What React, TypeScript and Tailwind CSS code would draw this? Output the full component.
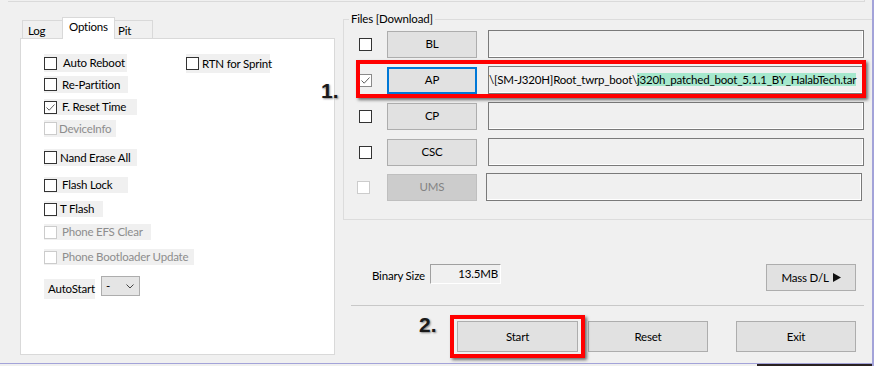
import React from 'react'

const Check = () => (
  <svg width="11" height="11" viewBox="0 0 11 11" className="block">
    <polyline points="1.5,5.5 4.2,8.2 9.5,2.5" fill="none" stroke="#5f5f5f" strokeWidth="1" />
  </svg>
)

interface BoxProps {
  checked?: boolean
  disabled?: boolean
  muted?: boolean
}

const Box: React.FC<BoxProps> = ({ checked = false, disabled = false, muted = false }) => (
  <span
    className={`flex w-[13px] h-[13px] shrink-0 items-center justify-center bg-white border ${
      disabled ? 'border-[#cccccc]' : muted ? 'border-[#8a8a8a]' : 'border-[#333333]'
    }`}
  >
    {checked && <Check />}
  </span>
)

interface OptProps {
  label: string
  cls: string
  gap: string
  checked?: boolean
  disabled?: boolean
}

const Opt: React.FC<OptProps> = ({ label, cls, gap, checked, disabled }) => (
  <div className={`flex items-center bg-[#f0f0f0] ${cls}`}>
    <Box checked={checked} disabled={disabled} />
    <span className={`${gap} leading-none whitespace-nowrap ${disabled ? 'text-[#8d8d8d]' : 'text-black'}`}>
      {label}
    </span>
  </div>
)

const Btn: React.FC<{ label: React.ReactNode; cls: string; focus?: boolean; disabled?: boolean }> = ({
  label,
  cls,
  focus,
  disabled,
}) => (
  <div
    className={`flex items-center justify-center border ${cls} ${
      disabled
        ? 'bg-[#cccccc] border-[#bfbfbf] text-[#838383]'
        : focus
        ? 'bg-[#e1e1e1] border-[#0078d7] shadow-[inset_0_0_0_1px_#0078d7] text-black'
        : 'bg-[#e1e1e1] border-[#adadad] text-black'
    }`}
  >
    {label}
  </div>
)

const Field: React.FC<{ cls: string; children?: React.ReactNode }> = ({ cls, children }) => (
  <div
    className={`flex items-center overflow-hidden bg-[#f0f0f0] border border-[#7a7a7a] shadow-[inset_-1px_-1px_0_#ffffff] h-[28px] ${cls}`}
  >
    {children}
  </div>
)

const Row: React.FC<{ name: string; cls: string; checked?: boolean; focus?: boolean; disabled?: boolean; children?: React.ReactNode }> = ({
  name,
  cls,
  checked,
  focus,
  disabled,
  children,
}) => (
  <div className={`flex items-center h-[28px] ${cls}`}>
    <div className={disabled ? 'ml-[13px]' : 'ml-[15px]'}>
      <Box checked={checked} muted={checked} disabled={disabled} />
    </div>
    <Btn label={name} cls={`w-[90px] h-[27px] ${disabled ? 'ml-[17px]' : 'ml-[15px]'}`} focus={focus} disabled={disabled} />
    <Field cls={disabled ? 'ml-[9px] w-[376px]' : 'ml-[11px] w-[376px]'}>{children}</Field>
  </div>
)

export default function App() {
  return (
    <div className="relative w-[874px] h-[366px] overflow-hidden bg-[#f0f0f0] border-r-2 border-[#a3a3d9] font-['Lato',sans-serif] text-[11.5px] tracking-[-0.2px] text-black">
      {/* strip from the control above */}
      <div className="ml-[8px] w-[857px] h-[2px] border-b border-r border-[#dadada]" />

      <div className="flex h-[361px]">
        {/* left: tabs */}
        <div className="w-[335px] pl-[20px]">
          <div className="mt-[15px] flex items-end h-[21px] pl-[2px]">
            <div className="relative w-[41px] h-[18px] border border-b-0 border-[#d9d9d9] bg-[#f0f0f0] pl-[5px] leading-[19px]">
              Log
            </div>
            <div className="relative z-10 -ml-px w-[53px] h-[22px] border border-b-0 border-[#d9d9d9] bg-white pl-[6px] leading-[18px] -mb-px">
              Options
            </div>
            <div className="relative -ml-px w-[39px] h-[18px] border border-b-0 border-[#d9d9d9] bg-[#f0f0f0] pl-[3px] leading-[19px]">
              Pit
            </div>
          </div>
          <div className="w-[315px] h-[317px] border border-[#d9d9d9] bg-white pl-[23px] flex flex-col">
            <div className="flex items-start mt-[15px]">
              <Opt label="Auto Reboot" cls="w-[83px] h-[18px]" gap="ml-[6px]" />
              <Opt label="RTN for Sprint" cls="ml-[59px] w-[84px] h-[19px]" gap="ml-[3px]" />
            </div>
            <Opt label="Re-Partition" cls="mt-[3px] w-[84px] h-[17px]" gap="ml-[5px]" />
            <Opt label="F. Reset Time" cls="mt-[6px] w-[93px] h-[16px]" gap="ml-[5px]" checked />
            <Opt label="DeviceInfo" cls="mt-[5px] w-[72px] h-[17px]" gap="ml-[2px]" disabled />
            <Opt label="Nand Erase All" cls="mt-[12px] w-[93px] h-[17px]" gap="ml-[3px]" />
            <Opt label="Flash Lock" cls="mt-[11px] w-[84px] h-[16px]" gap="ml-[5px]" />
            <Opt label="T Flash" cls="mt-[8px] w-[59px] h-[16px]" gap="ml-[3px]" />
            <Opt label="Phone EFS Clear" cls="mt-[7px] w-[107px] h-[16px]" gap="ml-[5px]" disabled />
            <Opt label="Phone Bootloader Update" cls="mt-[9px] w-[150px] h-[16px]" gap="ml-[5px]" disabled />
            <div className="mt-[11px] flex items-start">
              <div className="mt-[3px] w-[51px] h-[20px] bg-[#f0f0f0] pl-[4px] leading-[20px]">AutoStart</div>
              <div className="ml-[6px] w-[39px] h-[20px] bg-[#e5e5e5] border border-[#adadad] flex items-center pl-[4px]">
                <span className="leading-none">-</span>
                <svg width="8" height="5" viewBox="0 0 8 5" className="ml-auto mr-[5px]">
                  <polyline points="0.5,0.5 4,4 7.5,0.5" fill="none" stroke="#444" strokeWidth="1" />
                </svg>
              </div>
            </div>
          </div>
        </div>

        {/* right: files */}
        <div className="w-[537px] flex flex-col">
          <div className="relative mt-[17px] ml-[8px] h-[201px] border border-r-0 border-[#dcdcdc] pt-[10px] flex flex-col">
            <span className="absolute left-[5px] top-[-10px] bg-[#f0f0f0] px-[2px] leading-[18px]">
              Files [Download]
            </span>
            <Row name="BL" cls="" />
            <Row name="AP" cls="mt-[8px]" checked focus>
              <span className="whitespace-nowrap leading-[18px]">
                \[SM-J320H]Root_twrp_boot\
                <span className="bg-[#a6e8cd]">j320h_patched_boot_5.1.1_BY_HalabTech.tar</span>
              </span>
            </Row>
            <Row name="CP" cls="mt-[8px]" />
            <Row name="CSC" cls="mt-[8px]" />
            <Row name="UMS" cls="mt-[7px]" disabled />
          </div>

          <div className="mt-[44px] flex items-start pl-[37px] pr-[16px]">
            <span className="mt-[2px] h-[20px] leading-[20px]">Binary Size</span>
            <div className="ml-[5px] w-[71px] h-[20px] border border-[#a0a0a0] border-r-white border-b-white flex items-center justify-end pr-[2px]">
              13.5MB
            </div>
            <Btn
              cls="ml-auto w-[90px] h-[27px]"
              label={
                <span className="flex items-center">
                  Mass D/L
                  <svg width="8" height="9" viewBox="0 0 8 9" className="ml-[4px]">
                    <polygon points="0,0 8,4.5 0,9" fill="#111" />
                  </svg>
                </span>
              }
            />
          </div>

          <div className="mt-[14px] ml-[16px] mr-[8px] h-px bg-[#c8c8c8]" />

          <div className="mt-[15px] flex pl-[122px]">
            <Btn label="Start" cls="w-[121px] h-[31px]" />
            <Btn label="Reset" cls="ml-[10px] w-[120px] h-[31px]" />
            <Btn label="Exit" cls="ml-[28px] w-[120px] h-[31px]" />
          </div>
        </div>
      </div>

      <div className="h-px bg-[#a3a3d9]" />
      <div className="flex h-[2px]">
        <div className="w-[757px]" />
        <div className="flex-1 bg-[#2a2222]" />
      </div>

      {/* annotation overlays */}
      <div className="absolute left-[356px] top-[60px] w-[510px] h-[38px] border-[4px] border-[#ff0000] shadow-[2px_2px_3px_rgba(0,0,0,0.55)]" />
      <div className="absolute left-[450px] top-[315px] w-[135px] h-[43px] border-[4px] border-[#ff0000] shadow-[2px_2px_3px_rgba(0,0,0,0.55)]" />
      <span className="absolute left-[321px] top-[80px] font-['Liberation_Sans',sans-serif] font-bold text-[21px] tracking-normal leading-none text-[#1a1a1a] [text-shadow:1px_1px_2px_rgba(0,0,0,0.45)]">
        1.
      </span>
      <span className="absolute left-[419px] top-[314px] font-['Liberation_Sans',sans-serif] font-bold text-[21px] tracking-normal leading-none text-[#1a1a1a] [text-shadow:1px_1px_2px_rgba(0,0,0,0.45)]">
        2.
      </span>
    </div>
  )
}
